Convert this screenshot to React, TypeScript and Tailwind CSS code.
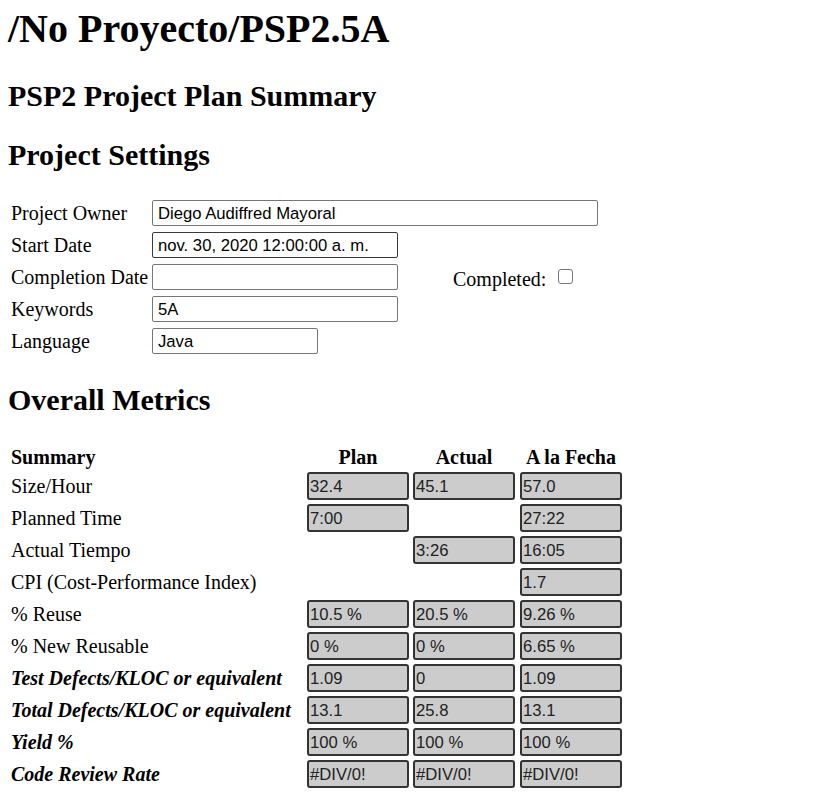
import React from "react";

const serif = "font-['Liberation_Serif','Times_New_Roman',serif]";
const sans = "font-['Liberation_Sans',Arial,sans-serif]";

function Input({ value, w, dark }: { value: string; w: string; dark?: boolean }) {
  return (
    <div
      className={`${w} h-[26px] rounded-[2px] border ${dark ? "border-[#3a3a3a]" : "border-[#767676]"} bg-white pl-[5px] flex items-center ${sans} text-[16.67px] leading-[19px] text-black`}
    >
      {value}
    </div>
  );
}

function Box({ v, last }: { v?: string; last?: boolean }) {
  if (v === undefined) return <div className="h-[28px]" />;
  return (
    <div
      className={`h-[28px] ${last ? "ml-[1px]" : ""} rounded-[3px] border-2 border-[#333] bg-[#cccccc] pl-[1px] flex items-center ${sans} text-[16.67px] leading-[19px] text-[#222]`}
    >
      {v}
    </div>
  );
}

const rows: { label: string; em?: boolean; vals: (string | undefined)[] }[] = [
  { label: "Size/Hour", vals: ["32.4", "45.1", "57.0"] },
  { label: "Planned Time", vals: ["7:00", undefined, "27:22"] },
  { label: "Actual Tiempo", vals: [undefined, "3:26", "16:05"] },
  { label: "CPI (Cost-Performance Index)", vals: [undefined, undefined, "1.7"] },
  { label: "% Reuse", vals: ["10.5 %", "20.5 %", "9.26 %"] },
  { label: "% New Reusable", vals: ["0 %", "0 %", "6.65 %"] },
  { label: "Test Defects/KLOC or equivalent", em: true, vals: ["1.09", "0", "1.09"] },
  { label: "Total Defects/KLOC or equivalent", em: true, vals: ["13.1", "25.8", "13.1"] },
  { label: "Yield %", em: true, vals: ["100 %", "100 %", "100 %"] },
  { label: "Code Review Rate", em: true, vals: ["#DIV/0!", "#DIV/0!", "#DIV/0!"] },
];

export default function App() {
  return (
    <div className={`min-h-[802px] bg-white text-black ${serif} pt-[6px] px-2 pb-4`}>
      <h1 className="text-[40px] leading-[46px] font-bold">/No Proyecto/PSP2.5A</h1>
      <h2 className="mt-[26px] text-[30px] leading-[35px] font-bold">PSP2 Project Plan Summary</h2>
      <h2 className="mt-[24px] text-[30px] leading-[35px] font-bold">Project Settings</h2>

      <div className="mt-[28px] flex flex-col gap-[6px] text-[20px] leading-[23px]">
        <div className="flex h-[26px] items-center">
          <div className="w-[144px] pl-[3px]">Project Owner</div>
          <Input value="Diego Audiffred Mayoral" w="w-[446px]" />
        </div>
        <div className="flex h-[26px] items-center">
          <div className="w-[144px] pl-[3px]">Start Date</div>
          <Input value="nov. 30, 2020 12:00:00 a. m." w="w-[246px]" dark />
        </div>
        <div className="flex h-[26px] items-center">
          <div className="w-[144px] pl-[3px] whitespace-nowrap">Completion Date</div>
          <Input value="" w="w-[246px]" />
          <div className="ml-[55px] mt-[4px] flex items-center">
            <span>Completed:</span>
            <span className="ml-[12px] -mt-[6px] inline-block h-[15px] w-[15px] rounded-[3px] border border-[#767676] bg-white" />
          </div>
        </div>
        <div className="flex h-[26px] items-center">
          <div className="w-[144px] pl-[3px]">Keywords</div>
          <Input value="5A" w="w-[246px]" />
        </div>
        <div className="flex h-[26px] items-center">
          <div className="w-[144px] pl-[3px]">Language</div>
          <Input value="Java" w="w-[166px]" />
        </div>
      </div>

      <h2 className="mt-[28px] text-[30px] leading-[35px] font-bold">Overall Metrics</h2>

      <div className="mt-[29px] text-[20px] leading-[23px]">
        <div className="grid h-[26px] grid-cols-[295px_102px_102px_103px] gap-x-[4px] font-bold">
          <div className="pl-[3px]">Summary</div>
          <div className="text-center">Plan</div>
          <div className="text-center">Actual</div>
          <div className="text-center pl-[1px]">A la Fecha</div>
        </div>
        <div className="flex flex-col gap-[4px]">
          {rows.map((r) => (
            <div key={r.label} className="grid grid-cols-[295px_102px_102px_103px] gap-x-[4px] items-center">
              <div className={`pl-[3px] whitespace-nowrap ${r.em ? "font-bold italic" : ""}`}>{r.label}</div>
              {r.vals.map((v, i) => (
                <Box key={i} v={v} last={i === 2} />
              ))}
            </div>
          ))}
        </div>
      </div>
    </div>
  );
}
